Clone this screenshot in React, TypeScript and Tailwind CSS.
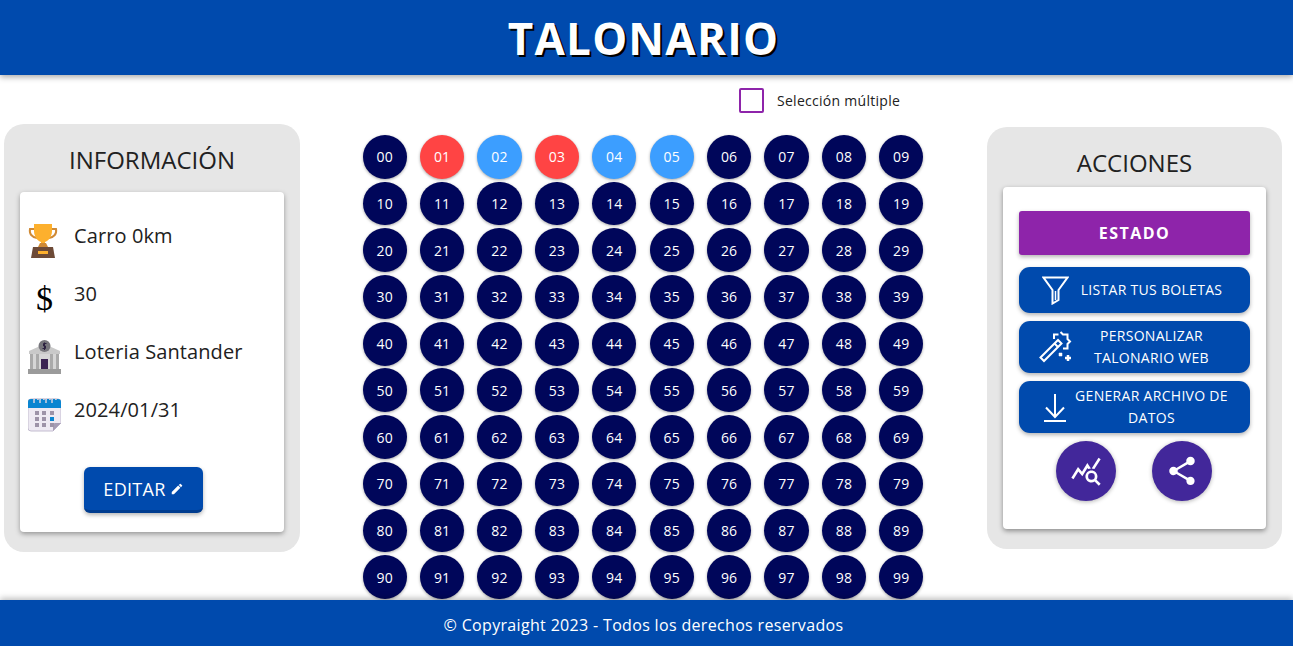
import { MdEdit, MdQueryStats, MdShare } from "react-icons/md";

const soldNumbers = [1, 3];
const reservedNumbers = [2, 4, 5];
const numbers = Array.from({ length: 100 }, (_, i) => i);

function TrophyIcon() {
  return (
    <svg width="30" height="34" viewBox="0 0 30 34">
      <path d="M7 5H2C1 10 4 13 9 14M23 5h5C29 10 26 13 21 14" fill="none" stroke="#d08a35" strokeWidth="2" />
      <path d="M6 0h18v7c0 6-4 10-7 11v3h-4v-3C10 17 6 13 6 7z" fill="#fdb02d" />
      <path d="M12 19h6l2 4H10z" fill="#d08a35" />
      <path d="M5 23h20l2 11H3z" fill="#6d4a37" />
      <rect x="10" y="27" width="10" height="3" fill="#fdb02d" />
    </svg>
  );
}

function BankIcon() {
  return (
    <svg width="33" height="34" viewBox="0 0 33 34">
      <path d="M1 11 16.500 4 32 11v3H1z" fill="#c9c9c9" />
      <circle cx="16.500" cy="6" r="6" fill="#77767c" />
      <path d="M18.500 3.500h-3v2.500h2v2.500h-3M16.500 2.500v7.500" fill="none" stroke="#2c2140" strokeWidth="1" />
      <rect x="3" y="14" width="27" height="16" fill="#d6d6d6" />
      <rect x="2" y="14" width="3" height="16" fill="#aaa" />
      <rect x="8" y="14" width="3" height="16" fill="#aaa" />
      <rect x="22" y="14" width="3" height="16" fill="#aaa" />
      <rect x="28" y="14" width="3" height="16" fill="#aaa" />
      <rect x="13" y="19" width="7" height="11" fill="#3a2352" />
      <rect x="0" y="29" width="33" height="5" fill="#9b9b9b" />
    </svg>
  );
}

function CalendarIcon() {
  return (
    <svg width="33" height="34" viewBox="0 0 33 34">
      <path d="M3 1h27q3 0 3 3v21l-8 8H3q-3 0-3-3V4q0-3 3-3z" fill="#eeeaf3" stroke="#c4bdd0" strokeWidth="1" />
      <path d="M0 4q0-3 3-3h27q3 0 3 3v6H0z" fill="#0a85d1" />
      <path d="M25 33l8-8h-6q-2 0-2 2z" fill="#a79db5" />
      {[6, 12, 18, 24].map((x) => (
        <path key={x} d="M0 5V2q0-2 2-2t2 2" transform={`translate(${x} 0)`} fill="none" stroke="#d6d1de" strokeWidth="1.500" />
      ))}
      {[7, 14, 22].flatMap((x) =>
        [13, 19, 25].map((y) => (
          <rect key={`${x}-${y}`} x={x} y={y} width="4" height="4" fill={x === 22 && y === 19 ? "#0a85d1" : "#9d93a8"} />
        ))
      )}
    </svg>
  );
}

function FilterIcon() {
  return (
    <svg width="27" height="29" viewBox="0 0 27 29" fill="none" stroke="white" strokeWidth="2">
      <path d="M1.500 1.500h24L16.500 14v10L10.500 27.500V14z" />
      <path d="M13.500 15v9" strokeWidth="1.500" />
    </svg>
  );
}

function WandIcon() {
  return (
    <svg width="33" height="33" viewBox="0 0 33 33" fill="none" stroke="white" strokeWidth="2">
      <path d="M1.500 26.500 19 9l3.500 3.500L5 30z" />
      <path d="M15.500 12.500l3.500 3.500" />
      <path d="M21.500 1 24 3.500h4.500V8L31 10.500 28.500 13v4.500H24M15 8V3.500h4.500" />
      <path d="M32 27h-6M29 24v6" strokeWidth="2.500" />
      <path d="M20 22h3v3h-3z" fill="white" strokeWidth="0.500" />
    </svg>
  );
}

function DownloadIcon() {
  return (
    <svg width="24" height="29" viewBox="0 0 24 29" fill="none" stroke="white" strokeWidth="2">
      <path d="M12 1v23" />
      <path d="M3 14.500 12 24l9-9.500" />
      <path d="M1 28h22" />
    </svg>
  );
}

function ActionButton({ icon, children, height }: { icon: React.ReactNode; children: React.ReactNode; height: string }) {
  return (
    <button className={`${height} flex w-full items-center rounded-[11px] bg-[#004aad] pl-[18px] pr-[20px] text-[14px] leading-[22px] tracking-[0.3px] text-white shadow-[0_2px_4px_rgba(0,0,0,0.3)]`}>
      <span className="flex w-[36px] shrink-0 justify-center">{icon}</span>
      <span className="flex-1 text-center">{children}</span>
    </button>
  );
}

function InfoRow({ icon, label }: { icon: React.ReactNode; label: string }) {
  return (
    <div className="flex h-[58px] items-center">
      <span className="flex w-[54px] shrink-0 justify-start pl-[8px] pt-[10px]">{icon}</span>
      <span className="self-center text-[20px] tracking-[0.1px] text-[#212121]">{label}</span>
    </div>
  );
}

export default function App() {
  return (
    <div className="flex h-[646px] w-[1293px] flex-col overflow-hidden bg-white font-['Open_Sans',sans-serif]">
      <header className="z-10 flex h-[75px] shrink-0 items-center justify-center bg-[#004aad] pr-[6px] shadow-[0_2px_6px_rgba(0,0,0,0.35)]">
        <h1 className="text-[44px] font-bold tracking-[1.200px] text-white [text-shadow:2px_2px_0_#000]">TALONARIO</h1>
      </header>

      <main className="flex min-h-0 flex-1 items-start">
        <section className="ml-[4px] mt-[49px] h-[428px] w-[296px] rounded-[20px] bg-[#e6e6e6] px-[16px] pt-[19px]">
          <h2 className="text-center text-[24px] leading-[33px] text-[#212121]">INFORMACIÓN</h2>
          <div className="mt-[16px] h-[340px] rounded-[4px] bg-white pt-[15px] shadow-[0_2px_5px_rgba(0,0,0,0.35)]">
            <InfoRow icon={<TrophyIcon />} label="Carro 0km" />
            <InfoRow icon={<span className="w-[33px] text-center font-['Liberation_Serif',serif] text-[34px] leading-[34px] text-black">$</span>} label="30" />
            <InfoRow icon={<BankIcon />} label="Loteria Santander" />
            <InfoRow icon={<CalendarIcon />} label="2024/01/31" />
            <button className="ml-[64px] mt-[28px] flex h-[46px] w-[119px] items-center justify-center gap-[4px] rounded-[6px] border-b-[3px] border-[#003c8f] bg-[#004aad] pt-[1px] text-[18px] tracking-[0.3px] text-white shadow-[0_2px_4px_rgba(0,0,0,0.3)]">
              EDITAR <MdEdit size={14} />
            </button>
          </div>
        </section>

        <section className="ml-[56px] w-[574px]">
          <div className="flex h-[60px] items-center pb-[9px] pl-[383px]">
            <span className="h-[25px] w-[25px] rounded-[2px] border-2 border-[#8e24aa]" />
            <span className="ml-[13px] text-[14px] tracking-[0.28px] text-[#212121]">Selección múltiple</span>
          </div>
          <div className="grid grid-cols-10">
            {numbers.map((n) => (
              <div key={n} className="flex h-[46.700px] items-start justify-center">
                <button
                  className={`flex h-[43.800px] w-[44.300px] items-center justify-center rounded-full text-[14px] tracking-[0.2px] text-white shadow-[0_1px_3px_rgba(0,0,0,0.35)] ${
                    soldNumbers.includes(n) ? "bg-[#ff4444]" : reservedNumbers.includes(n) ? "bg-[#3c9eff]" : "bg-[#00065a]"
                  }`}
                >
                  {String(n).padStart(2, "0")}
                </button>
              </div>
            ))}
          </div>
        </section>

        <section className="ml-[57px] mt-[52px] h-[422px] w-[295px] rounded-[20px] bg-[#e6e6e6] px-[16px] pt-[19px]">
          <h2 className="text-center text-[24px] leading-[33px] text-[#212121]">ACCIONES</h2>
          <div className="mt-[8px] h-[342px] rounded-[4px] bg-white px-[16px] pt-[24px] shadow-[0_2px_5px_rgba(0,0,0,0.4)]">
            <button className="h-[44px] w-full rounded-[3px] bg-[#8e24aa] text-[16px] font-bold tracking-[1.500px] text-white shadow-[0_2px_4px_rgba(0,0,0,0.3)]">
              ESTADO
            </button>
            <div className="mt-[12px] flex flex-col gap-[8px]">
              <ActionButton icon={<FilterIcon />} height="h-[46px]">LISTAR TUS BOLETAS</ActionButton>
              <ActionButton icon={<WandIcon />} height="h-[52px]">PERSONALIZAR TALONARIO WEB</ActionButton>
              <ActionButton icon={<DownloadIcon />} height="h-[52px]">GENERAR ARCHIVO DE DATOS</ActionButton>
            </div>
            <div className="mt-[8px] flex justify-center gap-[36px] pr-[2px]">
              <button className="flex h-[60px] w-[60px] items-center justify-center rounded-full bg-[#42279a] text-white shadow-[0_1px_4px_rgba(0,0,0,0.3)]">
                <MdQueryStats size={32} />
              </button>
              <button className="flex h-[60px] w-[60px] items-center justify-center rounded-full bg-[#42279a] text-white shadow-[0_1px_4px_rgba(0,0,0,0.3)]">
                <MdShare size={34} />
              </button>
            </div>
          </div>
        </section>
      </main>

      <footer className="z-10 flex h-[46px] shrink-0 items-center justify-center bg-[#004aad] pr-[6px] pt-[3px] text-[16px] tracking-[0.33px] text-white shadow-[0_-2px_6px_rgba(0,0,0,0.25)]">
        © Copyraight 2023 - Todos los derechos reservados
      </footer>
    </div>
  );
}
